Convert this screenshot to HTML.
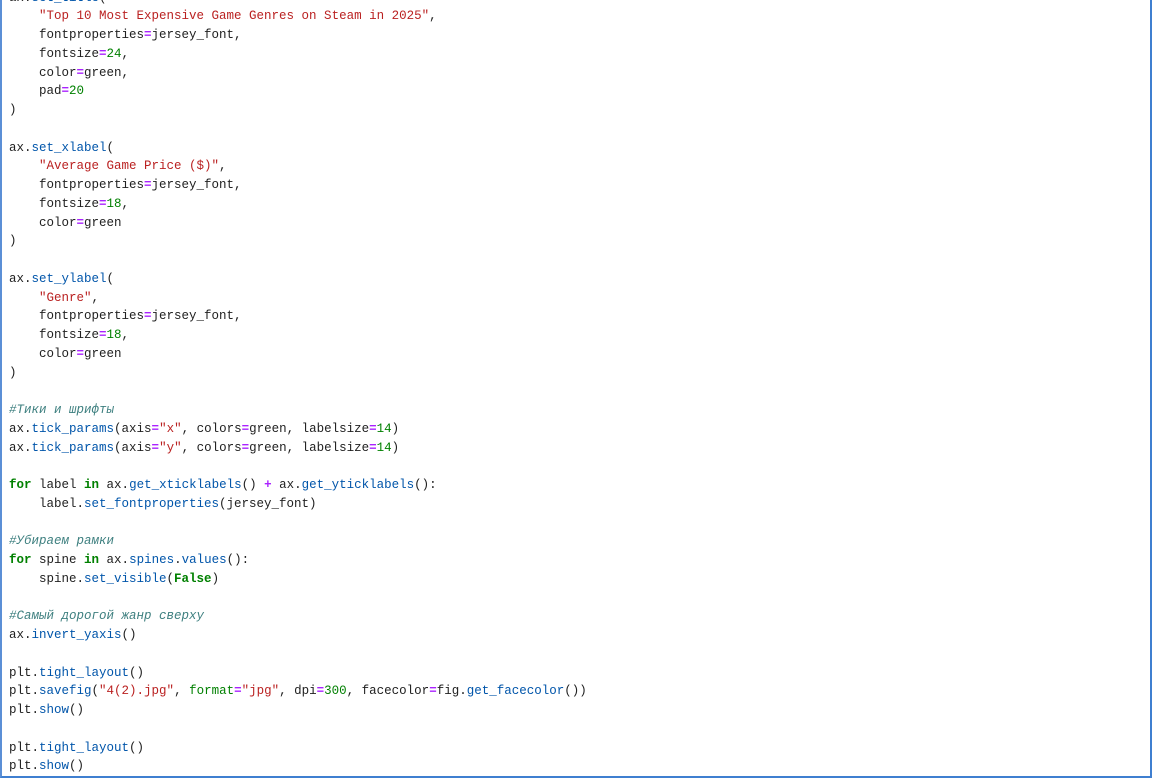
<!DOCTYPE html>
<html><head><meta charset="utf-8"><style>
html,body{margin:0;padding:0;background:#fff;width:1152px;height:779px;overflow:hidden}
.cell{position:absolute;left:0;top:-20px;width:1152px;height:798px;border-left:2px solid #5b8fd6;border-right:2px solid #3f7fd0;border-bottom:2px solid #3f7fd0;box-sizing:border-box}
pre{position:absolute;left:7px;top:8.6px;margin:0;font-family:"Liberation Mono","DejaVu Sans Mono",monospace;font-size:12.5px;line-height:18.75px;color:#212121}
.s{color:#ba2121}.n{color:#008000}.o{color:#aa22ff;font-weight:bold}.f{color:#0055aa}.k{color:#008000;font-weight:bold}.c{color:#3d7f7f;font-style:italic}
</style></head><body><div class="cell"><pre>ax.<span class="f">set_title</span>(
    <span class="s">"Top 10 Most Expensive Game Genres on Steam in 2025"</span>,
    fontproperties<span class="o">=</span>jersey_font,
    fontsize<span class="o">=</span><span class="n">24</span>,
    color<span class="o">=</span>green,
    pad<span class="o">=</span><span class="n">20</span>
)

ax.<span class="f">set_xlabel</span>(
    <span class="s">"Average Game Price ($)"</span>,
    fontproperties<span class="o">=</span>jersey_font,
    fontsize<span class="o">=</span><span class="n">18</span>,
    color<span class="o">=</span>green
)

ax.<span class="f">set_ylabel</span>(
    <span class="s">"Genre"</span>,
    fontproperties<span class="o">=</span>jersey_font,
    fontsize<span class="o">=</span><span class="n">18</span>,
    color<span class="o">=</span>green
)

<span class="c">#Тики и шрифты</span>
ax.<span class="f">tick_params</span>(axis<span class="o">=</span><span class="s">"x"</span>, colors<span class="o">=</span>green, labelsize<span class="o">=</span><span class="n">14</span>)
ax.<span class="f">tick_params</span>(axis<span class="o">=</span><span class="s">"y"</span>, colors<span class="o">=</span>green, labelsize<span class="o">=</span><span class="n">14</span>)

<span class="k">for</span> label <span class="k">in</span> ax.<span class="f">get_xticklabels</span>() <span class="o">+</span> ax.<span class="f">get_yticklabels</span>():
    label.<span class="f">set_fontproperties</span>(jersey_font)

<span class="c">#Убираем рамки</span>
<span class="k">for</span> spine <span class="k">in</span> ax.<span class="f">spines</span>.<span class="f">values</span>():
    spine.<span class="f">set_visible</span>(<span class="k">False</span>)

<span class="c">#Самый дорогой жанр сверху</span>
ax.<span class="f">invert_yaxis</span>()

plt.<span class="f">tight_layout</span>()
plt.<span class="f">savefig</span>(<span class="s">"4(2).jpg"</span>, <span class="n">format</span><span class="o">=</span><span class="s">"jpg"</span>, dpi<span class="o">=</span><span class="n">300</span>, facecolor<span class="o">=</span>fig.<span class="f">get_facecolor</span>())
plt.<span class="f">show</span>()

plt.<span class="f">tight_layout</span>()
plt.<span class="f">show</span>()
</pre></div></body></html>
